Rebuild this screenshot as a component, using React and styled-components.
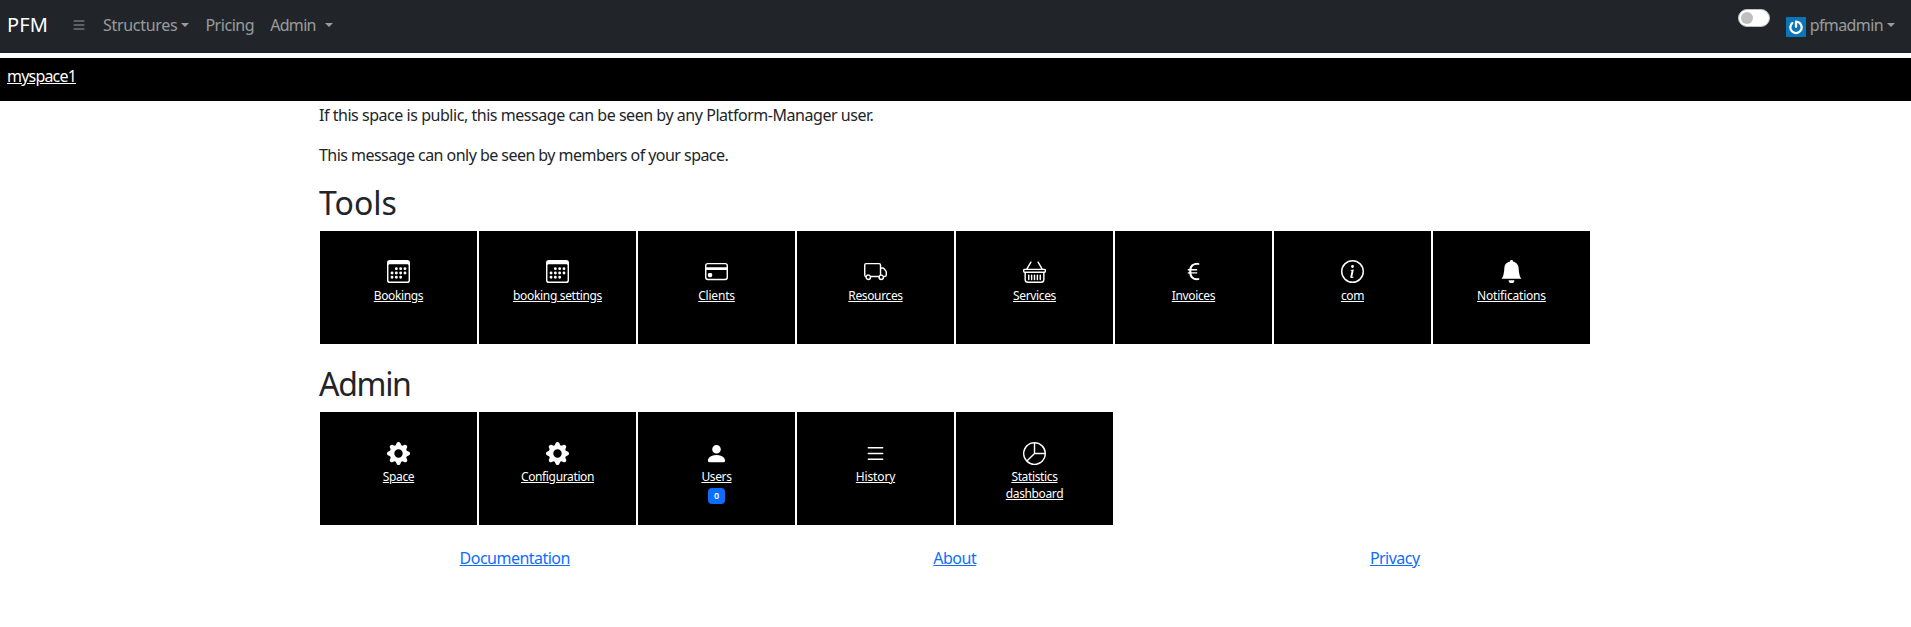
import React from "react";
import styled, { createGlobalStyle } from "styled-components";
import {
  BsCalendar3, BsCreditCard, BsTruck, BsBasket, BsCurrencyEuro, BsInfoCircle,
  BsBellFill, BsGearFill, BsPersonFill, BsList, BsPieChart,
} from "react-icons/bs";

const GlobalStyle = createGlobalStyle`
  *, *::before, *::after { box-sizing: border-box; }
  body {
    margin: 0;
    background: #fff;
    color: #212529;
    font: 400 16px/1.5 "Noto Sans", "Open Sans", sans-serif;
  }
`;

const Navbar = styled.nav`
  display: flex;
  align-items: center;
  height: 53px;
  padding: 0 8px 3px 7px;
  background: #212529;
`;

const Brand = styled.a`
  width: 56px;
  color: #fff;
  font-size: 20px;
  line-height: 30px;
  letter-spacing: 0.1px;
`;

const NavLink = styled.a`
  display: flex;
  align-items: center;
  padding: 0 8px;
  color: rgba(255, 255, 255, 0.55);
  letter-spacing: ${(p) => p.$track ?? -0.3}px;
  svg { display: block; }
`;

const Caret = styled.span`
  margin-left: ${(p) => p.$gap || 4}px;
  border-top: 4px solid;
  border-left: 4px solid transparent;
  border-right: 4px solid transparent;
`;

const NavEnd = styled.div`
  display: flex;
  align-items: center;
  gap: 8px;
  margin-left: auto;
`;

const Switch = styled.span`
  display: flex;
  align-items: center;
  width: 32px;
  height: 18px;
  margin-bottom: 14px;
  padding-left: 2px;
  border: 1px solid #bfbfbf;
  border-radius: 9px;
  background: #fff;
  &::before {
    content: "";
    width: 12px;
    height: 12px;
    border-radius: 50%;
    background: #bfbfbf;
  }
`;

const Avatar = styled.svg`
  width: 20px;
  height: 20px;
  margin: 4px 4px 0 0;
`;

const SpaceBar = styled.header`
  height: 43px;
  margin-top: 5px;
  padding: 6px 7px;
  background: #000;
  color: #fff;
`;

const SpaceLink = styled.a`
  text-decoration: underline;
  letter-spacing: -0.8px;
`;

const Main = styled.main`
  width: 1274px;
  margin: 0 auto;
  padding: 2px 0 0 0.5px;
`;

const Message = styled.p`
  margin: 0 0 16px;
  letter-spacing: ${(p) => p.$track}px;
`;

const Heading = styled.h2`
  margin: 0 0 8px;
  font-size: 32px;
  font-weight: 400;
  line-height: 38px;
  letter-spacing: ${(p) => p.$track || 0}px;
`;

const ToolsHeading = styled(Heading)`
  margin-top: 17px;
`;

const Cards = styled.div`
  display: flex;
  gap: 2px;
  padding: 1px;
  margin-bottom: 20px;
`;

const Card = styled.a`
  display: flex;
  flex-direction: column;
  align-items: center;
  width: 157px;
  height: 113px;
  padding: ${(p) => p.$top}px 30px 0;
  background: #000;
  color: #fff;
  text-align: center;
  svg { display: block; flex: none; width: 23px; height: 23px; }
`;

const CardLabel = styled.span`
  margin-top: ${(p) => p.$gap}px;
  font-size: 12px;
  line-height: 17px;
  letter-spacing: ${(p) => p.$track ?? -0.36}px;
  text-decoration: underline;
  white-space: ${(p) => (p.$wrap ? "normal" : "nowrap")};
`;

const Badge = styled.span`
  width: 17px;
  height: 16px;
  margin-top: 3px;
  border-radius: 4px;
  background: #0d6efd;
  font-size: 9px;
  font-weight: 600;
  line-height: 16px;
`;

const Footer = styled.footer`
  display: grid;
  grid-template-columns: repeat(3, 440px);
  justify-content: center;
  margin-right: 2px;
  text-align: center;
`;

const FooterLink = styled.a`
  color: #0d6efd;
  letter-spacing: -0.52px;
  text-decoration: underline;
`;

const tools = [
  { label: "Bookings", icon: BsCalendar3 },
  { label: "booking settings", icon: BsCalendar3, track: -0.32 },
  { label: "Clients", icon: BsCreditCard, track: -0.2 },
  { label: "Resources", icon: BsTruck },
  { label: "Services", icon: BsBasket },
  { label: "Invoices", icon: BsCurrencyEuro },
  { label: "com", icon: BsInfoCircle },
  { label: "Notifications", icon: BsBellFill, track: -0.2 },
];

const admin = [
  { label: "Space", icon: BsGearFill },
  { label: "Configuration", icon: BsGearFill },
  { label: "Users", icon: BsPersonFill, badge: 0 },
  { label: "History", icon: BsList, track: -0.15 },
  { label: "Statistics dashboard", icon: BsPieChart, wrap: true },
];

function CardRow({ items, top }) {
  return (
    <Cards>
      {items.map(({ label, icon: Icon, badge, wrap, track }) => (
        <Card key={label} $top={top}>
          <Icon />
          <CardLabel $wrap={wrap} $track={track} $gap={33 - top}>{label}</CardLabel>
          {badge !== undefined && <Badge>{badge}</Badge>}
        </Card>
      ))}
    </Cards>
  );
}

export default function App() {
  return (
    <>
      <GlobalStyle />
      <Navbar>
        <Brand>PFM</Brand>
        <NavLink><BsList /></NavLink>
        <NavLink>Structures<Caret /></NavLink>
        <NavLink $track={-0.45}>Pricing</NavLink>
        <NavLink $track={-0.7}>Admin<Caret $gap={9} /></NavLink>
        <NavEnd>
          <Switch />
          <NavLink $track={-0.6}>
            <Avatar viewBox="0 0 20 20">
              <rect width="20" height="20" fill="#0b76b7" />
              <path d="M6.2 6.1a5.7 5.7 0 1 0 7.6 0M10 4.6v5.2M10 4.6c1.6 0 2.8.5 3.8 1.5" fill="none" stroke="#fff" strokeWidth="2.3" strokeLinecap="round" />
            </Avatar>
            pfmadmin<Caret $gap={4} />
          </NavLink>
        </NavEnd>
      </Navbar>
      <SpaceBar><SpaceLink>myspace1</SpaceLink></SpaceBar>
      <Main>
        <Message $track={-0.46}>If this space is public, this message can be seen by any Platform-Manager user.</Message>
        <Message $track={-0.54}>This message can only be seen by members of your space.</Message>
        <ToolsHeading>Tools</ToolsHeading>
        <CardRow items={tools} top={29} />
        <Heading $track={-1.3}>Admin</Heading>
        <CardRow items={admin} top={30} />
        <Footer>
          <FooterLink>Documentation</FooterLink>
          <FooterLink>About</FooterLink>
          <FooterLink>Privacy</FooterLink>
        </Footer>
      </Main>
    </>
  );
}
